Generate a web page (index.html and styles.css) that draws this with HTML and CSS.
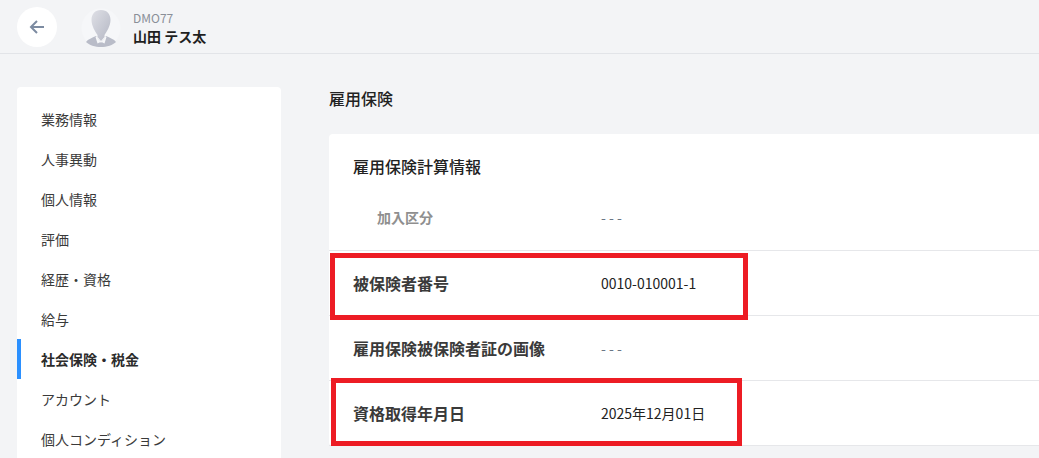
FILE: index.html
```html
<!DOCTYPE html>
<html lang="ja">
  <head>
    <meta charset="UTF-8" />
    <meta name="viewport" content="width=device-width, initial-scale=1.0" />
    <title>雇用保険</title>
    <link rel="stylesheet" href="styles.css">
  </head>
  <body>
    <header class="topbar">
      <button class="back-btn" aria-label="戻る">
        <svg width="18" height="18" viewBox="0 0 18 18" fill="none" stroke="#7c8ba1" stroke-width="2">
          <path d="M16 9H3M9 3L3 9l6 6" />
        </svg>
      </button>
      <div class="avatar">
        <svg width="40" height="40" viewBox="0 0 40 40">
          <defs>
            <linearGradient id="skin" x1="0" y1="0" x2="1" y2="1">
              <stop offset="0" stop-color="#dfe0e6" />
              <stop offset="1" stop-color="#b4b7c4" />
            </linearGradient>
          </defs>
          <circle cx="20" cy="20" r="19.5" fill="#f6f7f9" />
          <path d="M20 2c6 0 9.500 4 9.500 10 0 6-4 12-6 15v2L20 33l-3.500-4v-2c-2-3-6-9-6-15C10.500 6 14 2 20 2z" fill="url(#skin)" />
          <path d="M5 34c2-3 6-4 10-6l5 7 5-7c4 2 8 3 10 6-3 3-9 5-15 5S8 37 5 34z" fill="#b9bcc8" />
          <path d="M15.500 28.500l4 5.500-3 1.500-2-6.500zM24.500 28.500l-4 5.500 3 1.500 2-6.500z" fill="#f6f7f9" />
        </svg>
      </div>
      <div class="person">
        <div class="person-code">DMO77</div>
        <div class="person-name">山田 テス太</div>
      </div>
    </header>

    <main class="content">
      <nav class="sidebar">
        <a class="nav-item">業務情報</a>
        <a class="nav-item">人事異動</a>
        <a class="nav-item">個人情報</a>
        <a class="nav-item">評価</a>
        <a class="nav-item">経歴・資格</a>
        <a class="nav-item">給与</a>
        <a class="nav-item active">社会保険・税金</a>
        <a class="nav-item">アカウント</a>
        <a class="nav-item">個人コンディション</a>
      </nav>

      <section class="detail">
        <h2 class="detail-title">雇用保険</h2>
        <div class="card">
          <h3 class="card-title">雇用保険計算情報</h3>
          <div class="row row-sub">
            <div class="row-label">加入区分</div>
            <div class="row-value empty">- - -</div>
          </div>
          <div class="row">
            <div class="row-label">被保険者番号</div>
            <div class="row-value">0010-010001-1</div>
            <div class="mark mark-a"></div>
          </div>
          <div class="row">
            <div class="row-label">雇用保険被保険者証の画像</div>
            <div class="row-value empty">- - -</div>
          </div>
          <div class="row">
            <div class="row-label">資格取得年月日</div>
            <div class="row-value">2025年12月01日</div>
            <div class="mark mark-b"></div>
          </div>
        </div>
      </section>
    </main>
  </body>
</html>
```

FILE: styles.css
```css
html,
body {
  height: 100%;
}

body {
  margin: 0;
  overflow: hidden;
  background-color: #f3f4f6;
  color: #2b2b2b;
  font-family: "Noto Sans CJK JP", "Noto Sans", sans-serif;
  font-size: 14px;
}

.topbar {
  display: flex;
  align-items: center;
  height: 54px;
  box-sizing: border-box;
  padding: 1px 0 0 17px;
  border-bottom: 1px solid #e2e4e8;
}

.back-btn {
  display: flex;
  align-items: center;
  justify-content: center;
  width: 40px;
  height: 40px;
  padding: 0;
  border: none;
  border-radius: 50%;
  background-color: #ffffff;
}

.avatar {
  width: 40px;
  height: 40px;
  margin: 1px 0 0 24px;
}

.person {
  margin-left: 12px;
  padding-top: 1px;
}

.person-code {
  color: #8a8f98;
  font-size: 12px;
  line-height: 16px;
}

.person-name {
  color: #1f1f1f;
  font-size: 14px;
  font-weight: 700;
  line-height: 20px;
}

.content {
  display: flex;
  align-items: flex-start;
  padding: 33px 0 0 17px;
}

.sidebar {
  flex: none;
  width: 264px;
  padding: 12px 0;
  border-radius: 4px;
  background-color: #ffffff;
}

.nav-item {
  display: block;
  height: 40px;
  box-sizing: border-box;
  padding-left: 24px;
  color: #3a3a3a;
  font-size: 14px;
  line-height: 40px;
}

.nav-item.active {
  border-left: 4px solid #2b90ff;
  padding-left: 20px;
  color: #2b2b2b;
  font-weight: 700;
}

.detail {
  flex: 1;
  margin-left: 48px;
}

.detail-title {
  margin: 0;
  color: #222222;
  font-size: 16px;
  font-weight: 500;
  line-height: 23px;
}

.card {
  margin-top: 24px;
  border-radius: 4px 0 0 4px;
  background-color: #ffffff;
}

.card-title {
  margin: 0;
  padding: 21px 24px 0;
  color: #222222;
  font-size: 16px;
  font-weight: 500;
  line-height: 23px;
}

.row {
  position: relative;
  display: flex;
  align-items: center;
  height: 65px;
  box-sizing: border-box;
  padding-left: 24px;
  border-bottom: 1px solid #e6e7ea;
}

.row-sub {
  height: 73px;
  padding-left: 48px;
  padding-top: 6px;
}

.row-sub .row-label {
  width: 224px;
  color: #8f8f8f;
  font-size: 14px;
}

.row-label {
  width: 248px;
  color: #3a3a3a;
  font-size: 16px;
  font-weight: 700;
}

.row-value {
  color: #222222;
  font-size: 14px;
}

.row-value.empty {
  color: #6b7685;
}

.mark {
  position: absolute;
  box-sizing: border-box;
  border: 5px solid #ed1c24;
}

.mark-a {
  left: 1px;
  top: 2px;
  width: 418px;
  height: 67px;
}

.mark-b {
  left: 2px;
  top: -3px;
  width: 411px;
  height: 68px;
}
```
